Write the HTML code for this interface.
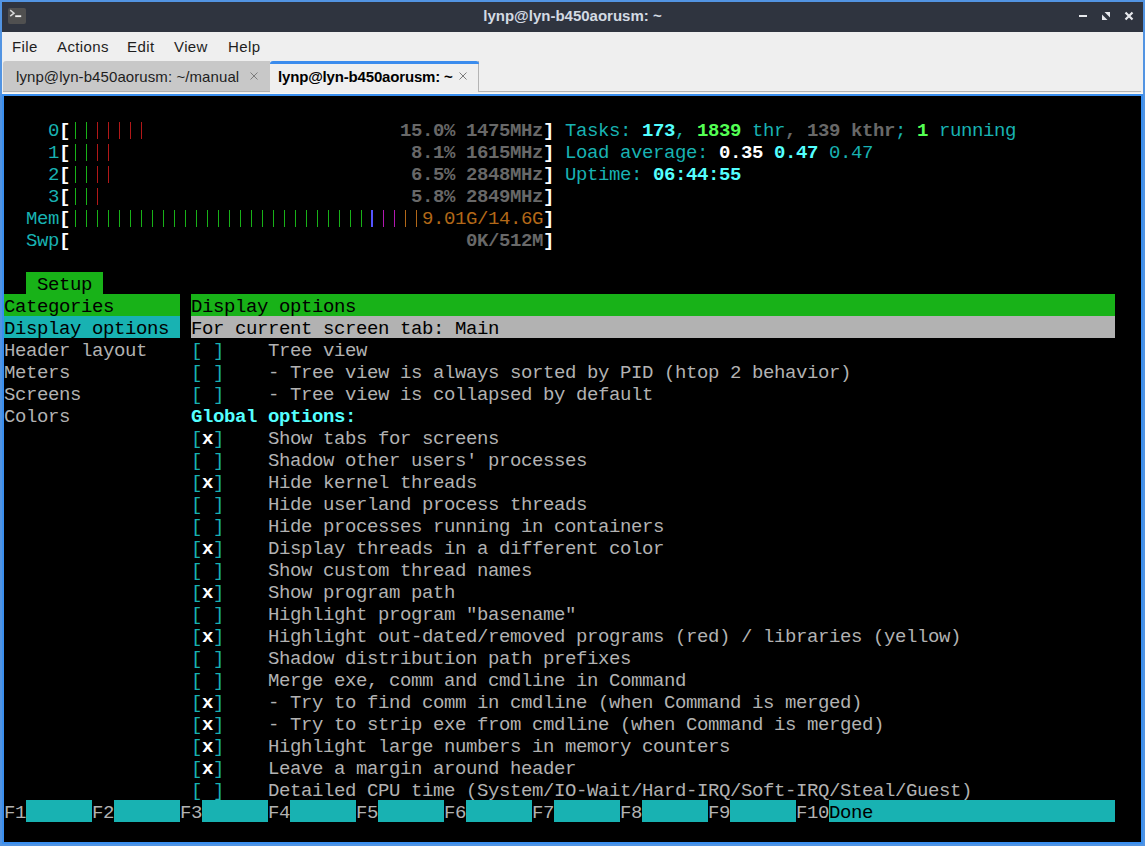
<!DOCTYPE html>
<html><head><meta charset="utf-8">
<style>
html,body{margin:0;padding:0;}
body{width:1145px;height:846px;position:relative;overflow:hidden;background:#5294e2;font-family:"Liberation Sans",sans-serif;}
#title{position:absolute;left:2px;top:2px;width:1141px;height:30px;background:#2f343f;}
#title .txt{position:absolute;left:0;top:0;width:1141px;text-align:center;line-height:28px;font-weight:bold;font-size:15px;color:#d3dae3;}
#icon{position:absolute;left:6px;top:6px;width:18px;height:16px;background:#505050;border-radius:2px;}
#menubar{position:absolute;left:2px;top:32px;width:1141px;height:29px;background:#efefef;}
.mi{position:absolute;top:0px;line-height:29px;font-size:15px;letter-spacing:0.4px;color:#1e1e1e;}
#tabbar{position:absolute;left:2px;top:61px;width:1141px;height:33px;background:#efefef;}
#tab1{position:absolute;left:1px;top:0;width:267px;height:30px;background:#c8c8c8;border-radius:3px 0 0 0;border-bottom:1px solid #b0b0b0;border-right:1px solid #b8b8b8;}
#tab2{position:absolute;left:268px;top:0;width:208px;height:31px;background:#efefef;border-right:1px solid #b4b4b4;}
#tab2 .hl{position:absolute;left:0;top:0;width:209px;height:3px;background:#3b8ced;border-radius:3px 3px 0 0;}
#baseline{position:absolute;left:477px;top:30px;width:662px;height:1px;background:#b4b4b4;}
#whiteline{position:absolute;left:0;top:32px;width:1141px;height:1px;background:#faf8f5;}
.tt{position:absolute;top:0px;line-height:31px;font-size:15px;color:#1e1e1e;white-space:pre;}
#tframe{position:absolute;left:2px;top:94px;width:1141px;height:750px;background:#3a8fef;}
#term{position:absolute;left:4px;top:96px;width:1137px;height:746px;background:#000;overflow:hidden;}
#term .bg{position:absolute;height:22px;}
#term .bar{position:absolute;height:17px;}
#term .t{position:absolute;white-space:pre;font-family:"Liberation Mono",monospace;font-size:19px;letter-spacing:-0.4px;line-height:22px;height:22px;margin-top:2px;}
#term .b{font-weight:bold;}
</style></head><body>
<div id="title">
  <div id="icon"><svg width="18" height="16" viewBox="0 0 18 16"><path d="M2.2 2.2 L6 5.2 L2.2 8.2" stroke="#d8d8d8" stroke-width="1.5" fill="none"/><rect x="7.2" y="7.3" width="6" height="1.8" fill="#f2f2f2"/></svg></div>
  <div class="txt">lynp@lyn-b450aorusm: ~</div>
  <svg style="position:absolute;left:0;top:0" width="1141" height="30" viewBox="2 2 1141 30">
    <rect x="1079" y="15" width="8" height="2" fill="#e6e8ec"/>
    <path d="M1104.5 12 H1110 V17.5 Z" fill="#e6e8ec"/>
    <path d="M1102 14.5 V20 H1107.5 Z" fill="#e6e8ec"/>
    <path d="M1125.5 12.5 L1132.5 19.5 M1132.5 12.5 L1125.5 19.5" stroke="#e6e8ec" stroke-width="2.2"/>
  </svg>
</div>
<div id="menubar">
  <div class="mi" style="left:10px">File</div>
  <div class="mi" style="left:55px">Actions</div>
  <div class="mi" style="left:125px">Edit</div>
  <div class="mi" style="left:172px">View</div>
  <div class="mi" style="left:226px">Help</div>
</div>
<div id="tabbar">
  <div id="tab1"><div class="tt" style="left:13px;letter-spacing:0.085px">lynp@lyn-b450aorusm: ~/manual</div>
    <svg style="position:absolute;left:247px;top:11px" width="8" height="8"><path d="M0.5 0.5 L7.5 7.5 M7.5 0.5 L0.5 7.5" stroke="#7c7c7c" stroke-width="1"/></svg>
  </div>
  <div id="tab2"><div class="hl"></div><div class="tt" style="left:8px;font-weight:bold;color:#000;letter-spacing:-0.17px">lynp@lyn-b450aorusm: ~</div>
    <svg style="position:absolute;left:189px;top:11px" width="8" height="8"><path d="M0.5 0.5 L7.5 7.5 M7.5 0.5 L0.5 7.5" stroke="#7c7c7c" stroke-width="1"/></svg>
  </div>
  <div id="baseline"></div>
  <div id="whiteline"></div>
</div>
<div id="tframe"></div>
<div id="term">
<div class="bg" style="left:22px;top:176px;width:77px;background:#18b218"></div>
<div class="bg" style="left:0px;top:198px;width:176px;background:#18b218"></div>
<div class="bg" style="left:187px;top:198px;width:924px;background:#18b218"></div>
<div class="bg" style="left:0px;top:220px;width:176px;background:#18b2b2"></div>
<div class="bg" style="left:187px;top:220px;width:924px;background:#b2b2b2"></div>
<div class="bg" style="left:22px;top:704px;width:66px;background:#18b2b2"></div>
<div class="bg" style="left:110px;top:704px;width:66px;background:#18b2b2"></div>
<div class="bg" style="left:198px;top:704px;width:66px;background:#18b2b2"></div>
<div class="bg" style="left:286px;top:704px;width:66px;background:#18b2b2"></div>
<div class="bg" style="left:374px;top:704px;width:66px;background:#18b2b2"></div>
<div class="bg" style="left:462px;top:704px;width:66px;background:#18b2b2"></div>
<div class="bg" style="left:550px;top:704px;width:66px;background:#18b2b2"></div>
<div class="bg" style="left:638px;top:704px;width:66px;background:#18b2b2"></div>
<div class="bg" style="left:726px;top:704px;width:66px;background:#18b2b2"></div>
<div class="bg" style="left:825px;top:704px;width:286px;background:#18b2b2"></div>
<div class="t" style="left:44px;top:22px;color:#18b2b2">0</div>
<div class="t b" style="left:55px;top:22px;color:#ffffff">[</div>
<div class="bar" style="left:71px;top:26px;width:1px;background:#18b218"></div>
<div class="bar" style="left:82px;top:26px;width:1px;background:#18b218"></div>
<div class="bar" style="left:93px;top:26px;width:1px;background:#b21818"></div>
<div class="bar" style="left:104px;top:26px;width:1px;background:#b21818"></div>
<div class="bar" style="left:115px;top:26px;width:1px;background:#b21818"></div>
<div class="bar" style="left:126px;top:26px;width:1px;background:#b21818"></div>
<div class="bar" style="left:137px;top:26px;width:1px;background:#b21818"></div>
<div class="t b" style="left:396px;top:22px;color:#686868">15.0% 1475MHz</div>
<div class="t b" style="left:539px;top:22px;color:#ffffff">]</div>
<div class="t" style="left:561px;top:22px;color:#18b2b2">Tasks:</div>
<div class="t b" style="left:638px;top:22px;color:#54ffff">173</div>
<div class="t" style="left:671px;top:22px;color:#18b2b2">,</div>
<div class="t b" style="left:693px;top:22px;color:#54ff54">1839</div>
<div class="t" style="left:737px;top:22px;color:#18b2b2"> thr</div>
<div class="t b" style="left:781px;top:22px;color:#686868">, 139 kthr</div>
<div class="t" style="left:891px;top:22px;color:#18b2b2">;</div>
<div class="t b" style="left:913px;top:22px;color:#54ff54">1</div>
<div class="t" style="left:924px;top:22px;color:#18b2b2"> running</div>
<div class="t" style="left:44px;top:44px;color:#18b2b2">1</div>
<div class="t b" style="left:55px;top:44px;color:#ffffff">[</div>
<div class="bar" style="left:71px;top:48px;width:1px;background:#18b218"></div>
<div class="bar" style="left:82px;top:48px;width:1px;background:#18b218"></div>
<div class="bar" style="left:93px;top:48px;width:1px;background:#b21818"></div>
<div class="bar" style="left:104px;top:48px;width:1px;background:#b21818"></div>
<div class="t b" style="left:407px;top:44px;color:#686868">8.1% 1615MHz</div>
<div class="t b" style="left:539px;top:44px;color:#ffffff">]</div>
<div class="t" style="left:561px;top:44px;color:#18b2b2">Load average:</div>
<div class="t b" style="left:715px;top:44px;color:#ffffff">0.35</div>
<div class="t b" style="left:770px;top:44px;color:#54ffff">0.47</div>
<div class="t" style="left:814px;top:44px;color:#18b2b2"> 0.47</div>
<div class="t" style="left:44px;top:66px;color:#18b2b2">2</div>
<div class="t b" style="left:55px;top:66px;color:#ffffff">[</div>
<div class="bar" style="left:71px;top:70px;width:1px;background:#18b218"></div>
<div class="bar" style="left:82px;top:70px;width:1px;background:#18b218"></div>
<div class="bar" style="left:93px;top:70px;width:1px;background:#b21818"></div>
<div class="bar" style="left:104px;top:70px;width:1px;background:#b21818"></div>
<div class="t b" style="left:407px;top:66px;color:#686868">6.5% 2848MHz</div>
<div class="t b" style="left:539px;top:66px;color:#ffffff">]</div>
<div class="t" style="left:561px;top:66px;color:#18b2b2">Uptime:</div>
<div class="t b" style="left:649px;top:66px;color:#54ffff">06:44:55</div>
<div class="t" style="left:44px;top:88px;color:#18b2b2">3</div>
<div class="t b" style="left:55px;top:88px;color:#ffffff">[</div>
<div class="bar" style="left:71px;top:92px;width:1px;background:#18b218"></div>
<div class="bar" style="left:82px;top:92px;width:1px;background:#18b218"></div>
<div class="bar" style="left:93px;top:92px;width:1px;background:#b21818"></div>
<div class="t b" style="left:407px;top:88px;color:#686868">5.8% 2849MHz</div>
<div class="t b" style="left:539px;top:88px;color:#ffffff">]</div>
<div class="t" style="left:22px;top:110px;color:#18b2b2">Mem</div>
<div class="t b" style="left:55px;top:110px;color:#ffffff">[</div>
<div class="bar" style="left:71px;top:114px;width:1px;background:#18b218"></div>
<div class="bar" style="left:82px;top:114px;width:1px;background:#18b218"></div>
<div class="bar" style="left:93px;top:114px;width:1px;background:#18b218"></div>
<div class="bar" style="left:104px;top:114px;width:1px;background:#18b218"></div>
<div class="bar" style="left:115px;top:114px;width:1px;background:#18b218"></div>
<div class="bar" style="left:126px;top:114px;width:1px;background:#18b218"></div>
<div class="bar" style="left:137px;top:114px;width:1px;background:#18b218"></div>
<div class="bar" style="left:148px;top:114px;width:1px;background:#18b218"></div>
<div class="bar" style="left:159px;top:114px;width:1px;background:#18b218"></div>
<div class="bar" style="left:170px;top:114px;width:1px;background:#18b218"></div>
<div class="bar" style="left:181px;top:114px;width:1px;background:#18b218"></div>
<div class="bar" style="left:192px;top:114px;width:1px;background:#18b218"></div>
<div class="bar" style="left:203px;top:114px;width:1px;background:#18b218"></div>
<div class="bar" style="left:214px;top:114px;width:1px;background:#18b218"></div>
<div class="bar" style="left:225px;top:114px;width:1px;background:#18b218"></div>
<div class="bar" style="left:236px;top:114px;width:1px;background:#18b218"></div>
<div class="bar" style="left:247px;top:114px;width:1px;background:#18b218"></div>
<div class="bar" style="left:258px;top:114px;width:1px;background:#18b218"></div>
<div class="bar" style="left:269px;top:114px;width:1px;background:#18b218"></div>
<div class="bar" style="left:280px;top:114px;width:1px;background:#18b218"></div>
<div class="bar" style="left:291px;top:114px;width:1px;background:#18b218"></div>
<div class="bar" style="left:302px;top:114px;width:1px;background:#18b218"></div>
<div class="bar" style="left:313px;top:114px;width:1px;background:#18b218"></div>
<div class="bar" style="left:324px;top:114px;width:1px;background:#18b218"></div>
<div class="bar" style="left:335px;top:114px;width:1px;background:#18b218"></div>
<div class="bar" style="left:346px;top:114px;width:1px;background:#18b218"></div>
<div class="bar" style="left:357px;top:114px;width:1px;background:#18b218"></div>
<div class="bar" style="left:367px;top:114px;width:2px;background:#5454ff"></div>
<div class="bar" style="left:379px;top:114px;width:1px;background:#b218b2"></div>
<div class="bar" style="left:390px;top:114px;width:1px;background:#b218b2"></div>
<div class="bar" style="left:401px;top:114px;width:1px;background:#b26818"></div>
<div class="bar" style="left:412px;top:114px;width:1px;background:#b26818"></div>
<div class="t" style="left:418px;top:110px;color:#b26818">9.01G/14.6G</div>
<div class="t b" style="left:539px;top:110px;color:#ffffff">]</div>
<div class="t" style="left:22px;top:132px;color:#18b2b2">Swp</div>
<div class="t b" style="left:55px;top:132px;color:#ffffff">[</div>
<div class="t b" style="left:462px;top:132px;color:#686868">0K/512M</div>
<div class="t b" style="left:539px;top:132px;color:#ffffff">]</div>
<div class="t" style="left:22px;top:176px;color:#000000"> Setup</div>
<div class="t" style="left:0px;top:198px;color:#000000">Categories</div>
<div class="t" style="left:187px;top:198px;color:#000000">Display options</div>
<div class="t" style="left:0px;top:220px;color:#000000">Display options</div>
<div class="t" style="left:187px;top:220px;color:#000000">For current screen tab: Main</div>
<div class="t" style="left:0px;top:242px;color:#b2b2b2">Header layout</div>
<div class="t" style="left:187px;top:242px;color:#18b2b2">[</div>
<div class="t" style="left:209px;top:242px;color:#18b2b2">]</div>
<div class="t" style="left:264px;top:242px;color:#b2b2b2">Tree view</div>
<div class="t" style="left:0px;top:264px;color:#b2b2b2">Meters</div>
<div class="t" style="left:187px;top:264px;color:#18b2b2">[</div>
<div class="t" style="left:209px;top:264px;color:#18b2b2">]</div>
<div class="t" style="left:264px;top:264px;color:#b2b2b2">- Tree view is always sorted by PID (htop 2 behavior)</div>
<div class="t" style="left:0px;top:286px;color:#b2b2b2">Screens</div>
<div class="t" style="left:187px;top:286px;color:#18b2b2">[</div>
<div class="t" style="left:209px;top:286px;color:#18b2b2">]</div>
<div class="t" style="left:264px;top:286px;color:#b2b2b2">- Tree view is collapsed by default</div>
<div class="t" style="left:0px;top:308px;color:#b2b2b2">Colors</div>
<div class="t b" style="left:187px;top:308px;color:#54ffff">Global options:</div>
<div class="t" style="left:187px;top:330px;color:#18b2b2">[</div>
<div class="t" style="left:209px;top:330px;color:#18b2b2">]</div>
<div class="t b" style="left:198px;top:330px;color:#ffffff">x</div>
<div class="t" style="left:264px;top:330px;color:#b2b2b2">Show tabs for screens</div>
<div class="t" style="left:187px;top:352px;color:#18b2b2">[</div>
<div class="t" style="left:209px;top:352px;color:#18b2b2">]</div>
<div class="t" style="left:264px;top:352px;color:#b2b2b2">Shadow other users' processes</div>
<div class="t" style="left:187px;top:374px;color:#18b2b2">[</div>
<div class="t" style="left:209px;top:374px;color:#18b2b2">]</div>
<div class="t b" style="left:198px;top:374px;color:#ffffff">x</div>
<div class="t" style="left:264px;top:374px;color:#b2b2b2">Hide kernel threads</div>
<div class="t" style="left:187px;top:396px;color:#18b2b2">[</div>
<div class="t" style="left:209px;top:396px;color:#18b2b2">]</div>
<div class="t" style="left:264px;top:396px;color:#b2b2b2">Hide userland process threads</div>
<div class="t" style="left:187px;top:418px;color:#18b2b2">[</div>
<div class="t" style="left:209px;top:418px;color:#18b2b2">]</div>
<div class="t" style="left:264px;top:418px;color:#b2b2b2">Hide processes running in containers</div>
<div class="t" style="left:187px;top:440px;color:#18b2b2">[</div>
<div class="t" style="left:209px;top:440px;color:#18b2b2">]</div>
<div class="t b" style="left:198px;top:440px;color:#ffffff">x</div>
<div class="t" style="left:264px;top:440px;color:#b2b2b2">Display threads in a different color</div>
<div class="t" style="left:187px;top:462px;color:#18b2b2">[</div>
<div class="t" style="left:209px;top:462px;color:#18b2b2">]</div>
<div class="t" style="left:264px;top:462px;color:#b2b2b2">Show custom thread names</div>
<div class="t" style="left:187px;top:484px;color:#18b2b2">[</div>
<div class="t" style="left:209px;top:484px;color:#18b2b2">]</div>
<div class="t b" style="left:198px;top:484px;color:#ffffff">x</div>
<div class="t" style="left:264px;top:484px;color:#b2b2b2">Show program path</div>
<div class="t" style="left:187px;top:506px;color:#18b2b2">[</div>
<div class="t" style="left:209px;top:506px;color:#18b2b2">]</div>
<div class="t" style="left:264px;top:506px;color:#b2b2b2">Highlight program &quot;basename&quot;</div>
<div class="t" style="left:187px;top:528px;color:#18b2b2">[</div>
<div class="t" style="left:209px;top:528px;color:#18b2b2">]</div>
<div class="t b" style="left:198px;top:528px;color:#ffffff">x</div>
<div class="t" style="left:264px;top:528px;color:#b2b2b2">Highlight out-dated/removed programs (red) / libraries (yellow)</div>
<div class="t" style="left:187px;top:550px;color:#18b2b2">[</div>
<div class="t" style="left:209px;top:550px;color:#18b2b2">]</div>
<div class="t" style="left:264px;top:550px;color:#b2b2b2">Shadow distribution path prefixes</div>
<div class="t" style="left:187px;top:572px;color:#18b2b2">[</div>
<div class="t" style="left:209px;top:572px;color:#18b2b2">]</div>
<div class="t" style="left:264px;top:572px;color:#b2b2b2">Merge exe, comm and cmdline in Command</div>
<div class="t" style="left:187px;top:594px;color:#18b2b2">[</div>
<div class="t" style="left:209px;top:594px;color:#18b2b2">]</div>
<div class="t b" style="left:198px;top:594px;color:#ffffff">x</div>
<div class="t" style="left:264px;top:594px;color:#b2b2b2">- Try to find comm in cmdline (when Command is merged)</div>
<div class="t" style="left:187px;top:616px;color:#18b2b2">[</div>
<div class="t" style="left:209px;top:616px;color:#18b2b2">]</div>
<div class="t b" style="left:198px;top:616px;color:#ffffff">x</div>
<div class="t" style="left:264px;top:616px;color:#b2b2b2">- Try to strip exe from cmdline (when Command is merged)</div>
<div class="t" style="left:187px;top:638px;color:#18b2b2">[</div>
<div class="t" style="left:209px;top:638px;color:#18b2b2">]</div>
<div class="t b" style="left:198px;top:638px;color:#ffffff">x</div>
<div class="t" style="left:264px;top:638px;color:#b2b2b2">Highlight large numbers in memory counters</div>
<div class="t" style="left:187px;top:660px;color:#18b2b2">[</div>
<div class="t" style="left:209px;top:660px;color:#18b2b2">]</div>
<div class="t b" style="left:198px;top:660px;color:#ffffff">x</div>
<div class="t" style="left:264px;top:660px;color:#b2b2b2">Leave a margin around header</div>
<div class="t" style="left:187px;top:682px;color:#18b2b2">[</div>
<div class="t" style="left:209px;top:682px;color:#18b2b2">]</div>
<div class="t" style="left:264px;top:682px;color:#b2b2b2">Detailed CPU time (System/IO-Wait/Hard-IRQ/Soft-IRQ/Steal/Guest)</div>
<div class="t" style="left:0px;top:704px;color:#b2b2b2">F1</div>
<div class="t" style="left:88px;top:704px;color:#b2b2b2">F2</div>
<div class="t" style="left:176px;top:704px;color:#b2b2b2">F3</div>
<div class="t" style="left:264px;top:704px;color:#b2b2b2">F4</div>
<div class="t" style="left:352px;top:704px;color:#b2b2b2">F5</div>
<div class="t" style="left:440px;top:704px;color:#b2b2b2">F6</div>
<div class="t" style="left:528px;top:704px;color:#b2b2b2">F7</div>
<div class="t" style="left:616px;top:704px;color:#b2b2b2">F8</div>
<div class="t" style="left:704px;top:704px;color:#b2b2b2">F9</div>
<div class="t" style="left:792px;top:704px;color:#b2b2b2">F10</div>
<div class="t" style="left:825px;top:704px;color:#000000">Done</div>
</div>
</body></html>
